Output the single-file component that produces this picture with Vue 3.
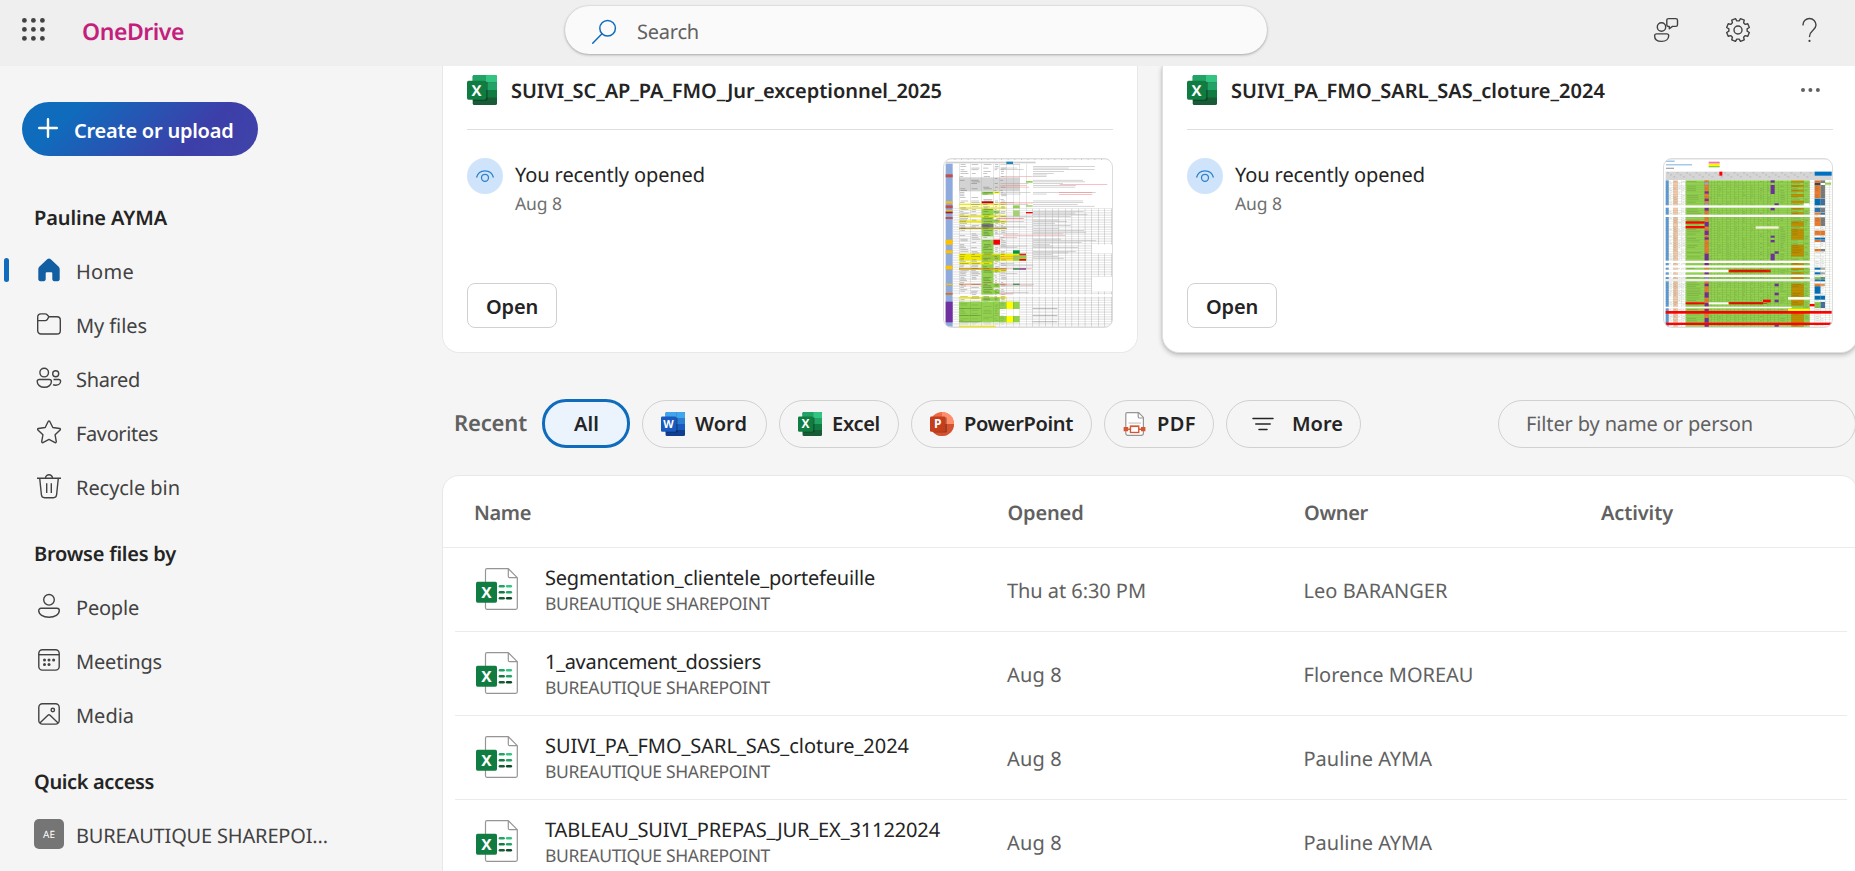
<script setup>
const vFit = {
  // Tracks a label so that it spans its design measure exactly.
  mounted(el, { value }) {
    if (!value) return
    const natural = el.getBoundingClientRect().width
    el.style.letterSpacing = (value - natural) / el.textContent.length + 'px'
  },
}

function gearPath() {
  const pts = []
  for (let k = 0; k < 8; k++) {
    const a = 22.5 + 45 * k
    for (const [d, r] of [[-15, 9.2], [-10, 11.6], [10, 11.6], [15, 9.2]]) {
      const t = ((a + d) * Math.PI) / 180
      pts.push((12 + r * Math.cos(t)).toFixed(2) + ' ' + (12 + r * Math.sin(t)).toFixed(2))
    }
  }
  return 'M' + pts.join('L') + 'Z'
}

const icons = {
  home: '<path fill="#115ea3" d="M10.5 1.1a2.2 2.2 0 0 1 3 0l8 7.3c.8.7 1.2 1.6 1.2 2.6v10.3c0 1-.8 1.9-1.9 1.9h-3.6c-1 0-1.9-.9-1.9-1.9v-6.1a1 1 0 0 0-1-1h-4.6a1 1 0 0 0-1 1v6.1c0 1-.8 1.9-1.9 1.9H3.2c-1 0-1.9-.9-1.9-1.9V11c0-1 .4-1.9 1.2-2.6z"/>',
  folder: '<path d="M.7 5.2a3.3 3.3 0 0 1 3.3-3.3h4.300c.7 0 1.300.3 1.800.8L12 4.700h8a3.300 3.300 0 0 1 3.300 3.300v10.700a3.300 3.300 0 0 1-3.300 3.300H4a3.300 3.300 0 0 1-3.300-3.300zM.7 8.600h7.600c.7 0 1.300-.3 1.800-.8L12 4.700"/>',
  shared: '<circle cx="7.200" cy="6.600" r="4.300"/><path d="M2.200 13.500h10.200a2 2 0 0 1 2 2c0 3.200-2.800 5.800-7 5.800s-7.200-2.600-7.200-5.800a2 2 0 0 1 2-2z"/><circle cx="18.700" cy="7.800" r="3"/><path d="M16.500 13.500h5.300c1 0 1.800.8 1.800 1.800 0 2-2 3.900-5 3.900-1 0-1.800-.1-2.500-.5"/>',
  star: '<path stroke-linejoin="round" d="M11.300 1.300a.8.8 0 0 1 1.400 0l3.100 6.200 6.900 1c.7.100 1 1 .4 1.500l-5 4.800 1.200 6.900c.1.700-.6 1.200-1.200.9L12 19.400l-6.100 3.200c-.6.3-1.300-.2-1.200-.9l1.200-6.900-5-4.800c-.5-.5-.3-1.400.4-1.500l6.900-1z"/>',
  bin: '<path d="M0 4.300h24M8.500 4.300a3.500 3.500 0 0 1 7 0M2.700 4.300l1.700 16.500a3.200 3.200 0 0 0 3.200 2.900h8.800a3.200 3.200 0 0 0 3.200-2.900l1.700-16.500M9.700 9.200v9.800M14.300 9.200v9.800"/>',
  person: '<circle cx="12" cy="5.800" r="5.300"/><path d="M4 14.300h16a2.300 2.300 0 0 1 2.300 2.300c0 3.800-4.300 6.700-10.300 6.700S1.700 20.400 1.700 16.600A2.300 2.300 0 0 1 4 14.300z"/>',
  calendar: '<rect x="1.800" y="1.700" width="20.400" height="20.400" rx="3.600"/><path d="M1.800 6.700h20.400"/><g fill="#424242" stroke="none"><circle cx="7.500" cy="12" r="1.500"/><circle cx="12" cy="12" r="1.500"/><circle cx="16.600" cy="12" r="1.500"/><circle cx="7.500" cy="16.500" r="1.500"/><circle cx="12" cy="16.500" r="1.500"/></g>',
  media: '<rect x="1.800" y="1.700" width="20.400" height="20.400" rx="3.600"/><circle cx="15.800" cy="8" r="1.700"/><path d="M2.900 21l8-7.700a1.600 1.600 0 0 1 2.200 0l8 7.700"/>',
  search: '<circle cx="15.600" cy="8.200" r="7.800"/><path stroke-linecap="round" d="M10 13.800L.7 23.300"/>',
  feedback: '<circle cx="7.500" cy="9" r="4.200"/><path d="M2.300 15.900h10.600a1.800 1.800 0 0 1 1.800 1.800c0 3.300-2.700 5.700-7.100 5.700S.6 21 .6 17.700a1.800 1.800 0 0 1 1.700-1.800z"/><path stroke-linejoin="round" d="M14.500.6h7.300a1.700 1.700 0 0 1 1.700 1.700v4.400a1.700 1.700 0 0 1-1.700 1.700h-3.300l-3.200 2.300V8.400h-.8a1.700 1.700 0 0 1-1.700-1.700V2.300a1.700 1.700 0 0 1 1.700-1.700z"/>',
  gear: '<path stroke-linejoin="round" d="' + gearPath() + '"/><circle cx="12" cy="12" r="4"/>',
  help: '<path stroke-linecap="round" d="M5 6.900a6.500 6.500 0 0 1 13 .1c0 3-1.800 4.300-3.700 6-1.800 1.600-2.800 2.900-2.800 5.500"/><circle cx="11.500" cy="22.900" r="1.100" fill="#424242" stroke="none"/>',
}

const letter = (ch, x, y, s) =>
  `<text x="${x}" y="${y}" font-size="${s}" font-weight="700" fill="#fff" text-anchor="middle" font-family="Open Sans, Noto Sans, sans-serif">${ch}</text>`
const sheetRows = (c) =>
  `<rect x="5.700" width="24.300" height="30" rx="1.600" fill="${c[3]}"/><path fill="${c[0]}" d="M7.300 0H19v7.500H5.700V1.600A1.600 1.600 0 0 1 7.300 0z"/><path fill="${c[1]}" d="M19 0h9.400A1.600 1.600 0 0 1 30 1.600V7.500H19z"/><path fill="${c[4]}" d="M5.700 7.500H19V15H5.700z"/><path fill="${c[2]}" d="M19 7.500h11V15H19z"/><path fill="${c[5]}" d="M19 15h11v7.500H19z"/><path fill="#000" opacity=".28" d="M5.700 6.500h13.500a1.600 1.600 0 0 1 1.600 1.600v16a1.600 1.600 0 0 1-1.600 1.600H5.700z"/>`
const logos = {
  excel: sheetRows(['#21a366', '#33c481', '#21a366', '#185c37', '#107c41', '#107c41']) + '<rect y="5.700" width="19" height="19" rx="1.600" fill="#107c41"/>' + letter('X', 9.4, 20.6, 15),
  word: sheetRows(['#41a5ee', '#41a5ee', '#2b7cd3', '#103f91', '#2b7cd3', '#185abd']) + '<path fill="#185abd" d="M5.700 15H19v7.500H5.700z"/><rect y="5.700" width="19" height="19" rx="1.600" fill="#185abd"/>' + letter('W', 9.5, 20.2, 13.5),
  powerpoint: '<circle cx="15" cy="15" r="15" fill="#ed6c47"/><path fill="#ff8f6b" d="M15 0a15 15 0 0 1 15 15H15z"/><path fill="#d35230" d="M0 15h30a15 15 0 0 1-30 0z"/><path fill="#000" opacity=".3" d="M6 6.500h13.400a1.600 1.600 0 0 1 1.600 1.600v16a1.600 1.600 0 0 1-1.600 1.600H5z"/><rect y="5.700" width="19.300" height="19" rx="1.600" fill="#c43e1c"/>' + letter('P', 9.8, 20.6, 15),
  pdf: '<path d="M5 .8h14.500l6 6V27a2.200 2.200 0 0 1-2.200 2.200H5.700A2.200 2.200 0 0 1 3.500 27V2.400A1.600 1.600 0 0 1 5 .8z" fill="#fff" stroke="#979593" stroke-width="1.500"/><path d="M19 1v4.800A1.600 1.600 0 0 0 20.600 7.500h5" fill="none" stroke="#979593" stroke-width="1.500"/><path d="M7 13.800h15.500" stroke="#c8c6c4" stroke-width="1.500"/><path d="M8.500 17h12" stroke="#e8a692" stroke-width="1.300"/><path fill="#d65532" d="M.8 18.800h5.700v5.400H.8zM22.500 18.800H28v5.400h-5.500z"/><rect x="9.300" y="18" width="10.400" height="7.600" fill="#fff" stroke="#d65532" stroke-width="1.700"/><path fill="#d65532" d="M6.500 20.700h3v1.700h-3zM19.700 20.700h3v1.700h-3z"/>',
  more: '<path d="M2.500 8h25M6 15h18M10 22h10" stroke="#242424" stroke-width="1.900" stroke-linecap="round"/>',
}

const groups = [
  { title: 'Pauline AYMA', w: 133, items: [
    { icon: 'home', label: 'Home', w: 58, active: true },
    { icon: 'folder', label: 'My files', w: 71 },
    { icon: 'shared', label: 'Shared', w: 64 },
    { icon: 'star', label: 'Favorites', w: 82 },
    { icon: 'bin', label: 'Recycle bin', w: 104 },
  ] },
  { title: 'Browse files by', w: 142, items: [
    { icon: 'person', label: 'People', w: 63 },
    { icon: 'calendar', label: 'Meetings', w: 86 },
    { icon: 'media', label: 'Media', w: 58 },
  ] },
  { title: 'Quick access', w: 120, items: [{ badge: 'AE', label: 'BUREAUTIQUE SHAREPOI…', w: 252 }] },
]

const pills = [
  { label: 'All', w: 25, active: true, cls: 'p-all' },
  { label: 'Word', w: 52, logo: 'word', cls: 'p-word' },
  { label: 'Excel', w: 48, logo: 'excel', cls: 'p-excel' },
  { label: 'PowerPoint', w: 109, logo: 'powerpoint', cls: 'p-ppt' },
  { label: 'PDF', w: 39, logo: 'pdf', cls: 'p-pdf' },
  { label: 'More', w: 51, logo: 'more', cls: 'p-more' },
]

const rows = [
  { name: 'Segmentation_clientele_portefeuille', w: 330, opened: 'Thu at 6:30 PM', ow: 139, owner: 'Leo BARANGER', pw: 144 },
  { name: '1_avancement_dossiers', w: 216, opened: 'Aug 8', ow: 55, owner: 'Florence MOREAU', pw: 170 },
  { name: 'SUIVI_PA_FMO_SARL_SAS_cloture_2024', w: 364, opened: 'Aug 8', ow: 55, owner: 'Pauline AYMA', pw: 128.5 },
  { name: 'TABLEAU_SUIVI_PREPAS_JUR_EX_31122024', w: 395, opened: 'Aug 8', ow: 55, owner: 'Pauline AYMA', pw: 128.5 },
]

let seed = 7
const rnd = () => (seed = (seed * 16807) % 2147483647) / 2147483647
const G = '#92d050', Y = '#f0ea00', R = '#fe0000', P = '#7030a0', O = '#ffc000', B = '#8faadc'

function sheetA() {
  const s = []
  const add = (x, y, w, h, c) => s.push([x, y, w, h, c])
  add(8, 1, 500, 5, '#f1f1f1')
  for (let x = 14; x < 500; x += 20) add(x, 3, 3, 2, '#b8b8b8')
  add(8, 11, 270, 5, '#cfcfcf')
  add(190, 11, 20, 7, '#1b86b8')
  add(8, 17, 21, 489, B)
  for (const [y, h, c] of [[49, 9, '#c0504d'], [130, 6, O], [142, 9, '#c0504d'], [157, 4, O], [161, 5, '#a02020'], [177, 6, '#c0504d'], [245, 15, O], [277, 9, O], [323, 11, O], [377, 4, O], [405, 5, '#e26b0a'], [431, 62, P]]) add(8, y, 21, h, c)
  add(48, 58, 182, 42, '#d3d3d3')
  // right-hand grid
  for (let i = 0, y = 152; y < 506; y += 5.2, i++) {
    const wide = y < 260 || (y > 287 && y < 355) || y > 400
    add(29, y, wide ? 480 : 418, 0.9, '#b9b9b9')
  }
  for (let x = 268; x < 510; x += 19.7) {
    add(x, 152, 1, x > 450 ? 108 : 354, '#999')
    if (x > 450) { add(x, 287, 1, 68, '#999'); add(x, 400, 1, 106, '#999') }
  }
  for (const x of [48, 82, 116, 151, 170, 190, 210, 229, 249]) add(x, 17, 0.9, 489, '#aaa')
  // highlighted cells
  add(116, 152, 35, 275, G)
  add(116, 101, 35, 9, G); add(151, 101, 19, 5, Y)
  add(48, 137, 143, 4, Y); add(48, 148, 143, 4, Y); add(210, 142, 20, 9, G); add(249, 142, 20, 4, G); add(249, 69, 20, 5, G)
  add(116, 130, 35, 6, '#c00000'); add(249, 162, 20, 4, R); add(210, 157, 20, 18, '#a9cf76')
  add(48, 172, 143, 5, Y); add(48, 188, 143, 6, Y); add(116, 185, 54, 9, '#9ac653'); add(151, 158, 19, 8, G)
  add(48, 209, 143, 4, '#b9a428'); add(116, 198, 35, 10, '#777')
  add(151, 245, 20, 15, R); add(116, 235, 35, 10, '#eee')
  add(210, 277, 20, 11, '#009444')
  add(48, 287, 182, 21, Y); add(116, 290, 55, 18, '#9dc83b'); add(210, 292, 40, 16, G); add(229, 287, 20, 5, '#e02020'); add(229, 303, 20, 5, R)
  add(48, 313, 100, 6, Y); add(48, 330, 143, 5, '#d2a017'); add(210, 330, 20, 5, '#009444'); add(229, 330, 20, 5, P)
  add(116, 336, 55, 7, G); add(151, 336, 39, 4, Y)
  add(48, 377, 143, 4, '#f4a47a'); add(116, 377, 54, 12, G); add(210, 377, 20, 4, '#009444'); add(116, 395, 54, 14, G)
  add(29, 410, 480, 6, '#fff'); add(48, 417, 143, 5, Y); add(116, 418, 54, 12, G)
  add(48, 431, 182, 62, G); add(190, 431, 20, 22, '#ffff00'); add(170, 453, 60, 21, '#fff'); add(190, 474, 20, 19, '#ffff00')
  for (const x of [82, 116, 151, 170, 190, 210]) add(x, 431, 0.8, 62, 'rgba(60,90,40,.45)')
  add(48, 503, 110, 4, Y)
  // cell contents
  for (let y = 19; y < 502; y += 5.2) {
    for (const [x, w] of [[50, 26], [84, 27], [120, 27], [154, 12], [172, 16]])
      if (rnd() < (y < 125 ? 0.6 : 0.75)) add(x + rnd() * 3, y, w * (0.4 + rnd() * 0.6), 1.6, y < 425 ? 'rgba(45,45,45,.5)' : 'rgba(45,60,20,.22)')
    if (y < 420 && rnd() < 0.4) add(172, y, 30 + rnd() * 75, 1.4, rnd() < 0.2 ? '#e98888' : '#a5a5a5')
    if (y < 300 && rnd() < 0.62) add(270, y, 40 + rnd() * 160, 1.4, '#a3a3a3')
  }
  add(350, 78, 143, 1.5, '#f08080'); add(348, 103, 100, 1.5, '#f08080'); add(348, 109, 100, 1.5, '#f08080'); add(180, 232, 186, 1.5, '#ef9090')
  add(170, 134, 100, 1.5, '#ef6060'); add(160, 180, 82, 1.7, '#ef5050'); add(170, 407, 40, 1.5, '#ef6060')
  for (const y of [450, 471, 491]) { add(48, y, 65, 1.4, '#58813c'); add(269, y, 74, 1.4, '#777') }
  return s
}

function sheetB() {
  const s = []
  const add = (x, y, w, h, c) => s.push([x - 190, y - 475, w, h, c])
  add(196, 476, 500, 5, '#eee')
  add(199, 483, 26, 3, '#73acd8'); add(199, 494, 78, 3, '#79b1df'); add(199, 504, 24, 4, '#aaa')
  add(327, 486, 33, 6, '#f26cc0'); add(327, 492, 33, 7, '#f9f900'); add(327, 499, 33, 4, '#8fc93e')
  add(198, 516, 498, 25, '#d5d5d5'); add(645, 516, 51, 12, '#0070c0'); add(359, 516, 9, 12, R)
  for (let i = 0; i < 46; i++) add(202 + i * 9.5, 519 + (i % 3) * 6, 6, 1.6, '#a0a0a0')
  add(198, 542, 9, 439, '#5b9bd5'); add(221, 542, 13, 439, '#f4c9ac')
  add(258, 542, 372, 439, G)
  add(315, 542, 12, 439, '#ed7d31')
  for (const [y, h] of [[575, 7], [597, 7], [624, 9], [667, 14], [693, 13], [713, 7], [762, 21], [790, 8], [817, 7], [852, 8], [878, 16], [910, 10], [928, 10], [955, 14], [975, 6]]) add(315, y, 12, h, P)
  for (const y of [548, 611, 832]) add(315, y, 12, 7, '#8faadc')
  for (const [y, h] of [[543, 6], [556, 6], [570, 6], [583, 9], [603, 8], [624, 6], [638, 7], [665, 16], [687, 33], [735, 36], [790, 7], [804, 7], [818, 6], [832, 6], [852, 40], [898, 20], [928, 53]]) add(575, y, 37, h, '#c09000')
  for (const [x, y, h] of [[513, 542, 7], [513, 556, 27], [525, 611, 7], [513, 624, 8], [513, 708, 6], [513, 721, 7], [525, 755, 7], [513, 762, 21], [525, 852, 8], [525, 879, 8], [525, 900, 8], [525, 975, 6]]) add(x, y, 12, h, P)
  for (const [y, h, a, b] of [[542, 8, '#ed7d31', '#808080'], [550, 6, '#1f4e79', '#fff'], [556, 40, '#ed7d31', '#808080'], [597, 20, '#0070c0', '#4472a4'], [624, 14, '#2f75b5', '#808080'], [639, 6, '#ed7d31', '#2f75b5'], [653, 26, '#ed7d31', '#808080'], [693, 14, '#ed7d31', '#ed7d31'], [714, 6, '#0070c0', '#0070c0'], [721, 6, '#ed7d31', '#8080a0'], [748, 7, '#ed7d31', '#808080'], [804, 6, '#0070c0', '#aaa'], [818, 6, '#0070c0', '#aaa'], [832, 6, '#92d050', '#70a060'], [839, 6, '#2f75b5', '#0070c0'], [852, 8, '#ed7d31', '#f4a470'], [860, 22, '#0070c0', '#fff'], [888, 12, '#0070c0', '#0070c0'], [907, 18, '#92d050', '#4472a4']]) {
    add(645, y, 18, h, a); add(663, y, 13, h, b)
  }
  // row and column rules
  for (let y = 549; y < 981; y += 6.85) add(198, y, 498, 0.9, 'rgba(70,90,50,.3)')
  for (const x of [207, 221, 234, 246, 258, 315, 327, 336, 345, 354, 368, 380, 392, 404, 416, 428, 440, 452, 464, 477, 490, 502, 513, 525, 537, 564, 575, 612, 630, 645, 663, 676, 688]) add(x, 542, 0.9, 439, 'rgba(60,90,40,.36)')
  for (let y = 545; y < 978; y += 6.85)
    for (const [x, w] of [[209, 10], [223, 9], [236, 8], [248, 8], [262, 44], [317, 8], [330, 5], [357, 7], [383, 6], [407, 5], [430, 7], [455, 5], [481, 8], [504, 6], [542, 16], [578, 28], [615, 12], [647, 14], [665, 9]])
      if (rnd() < 0.7) add(x, y, w * (0.5 + rnd() * 0.5), 1.5, 'rgba(40,60,30,.32)')
  // separator bands
  for (const [y, h] of [[617, 7], [645, 7], [783, 7], [797, 7], [825, 7], [838, 7], [893, 5], [921, 7], [941, 7]]) {
    if (y === 893) add(565, y, 65, h, '#fff')
    else if (y !== 941) add(196, y, y > 890 ? 380 : 446, y === 921 ? 5 : h, y === 838 ? '#eee' : '#fff')
  }
  add(468, 680, 69, 7, '#f6f2dc')
  add(612, 611, 18, 8, '#fff'); add(565, 893, 65, 7, '#fff'); add(565, 927, 65, 7, '#ffff00')
  add(258, 665, 57, 7, R); add(258, 679, 57, 7, R)
  add(196, 810, 191, 8, '#fff')
  add(387, 810, 126, 8, '#ed1c00'); add(327, 908, 60, 6, '#fff'); add(387, 907, 103, 7, '#ed1c00'); add(490, 900, 23, 8, R); add(258, 908, 57, 6, R); add(630, 913, 15, 7, R)
  for (const y of [813, 910]) add(392, y, 110, 1.5, '#9c1400')
  add(676, 549, 18, 6, G)
  add(198, 934, 498, 8, R); add(198, 969, 498, 7, R)
  return s
}

const cards = [
  { title: 'SUIVI_SC_AP_PA_FMO_Jur_exceptionnel_2025', w: 431, cells: sheetA() },
  { title: 'SUIVI_PA_FMO_SARL_SAS_cloture_2024', w: 374, cells: sheetB(), hover: true },
]
</script>

<template>
  <div class="app">
    <header class="topbar">
      <svg class="waffle" viewBox="0 0 24 24">
        <template v-for="r in 3" :key="r">
          <circle v-for="c in 3" :key="c" :cx="c * 9 - 6.6" :cy="r * 9 - 6.6" r="2.4" />
        </template>
      </svg>
      <div class="brand"><span v-fit="102">OneDrive</span></div>
      <div class="search">
        <svg class="ic search-ic" viewBox="0 0 24 24" v-html="icons.search"></svg>
        <span v-fit="62">Search</span>
      </div>
      <div class="actions">
        <svg v-for="n in ['feedback', 'gear', 'help']" :key="n" class="ic" viewBox="0 0 24 24" v-html="icons[n]"></svg>
      </div>
    </header>

    <div class="body">
      <nav class="side">
        <button class="create">
          <svg viewBox="0 0 20 20"><path d="M10 1.2v17.6M1.2 10h17.6" /></svg>
          <span v-fit="159.5">Create or upload</span>
        </button>
        <section v-for="g in groups" :key="g.title" class="group">
          <h2><span v-fit="g.w">{{ g.title }}</span></h2>
          <a v-for="i in g.items" :key="i.label" class="nav" :class="{ active: i.active }">
            <span class="slot">
              <span v-if="i.badge" class="badge">{{ i.badge }}</span>
              <svg v-else class="ic" viewBox="0 0 24 24" v-html="icons[i.icon]"></svg>
            </span>
            <span v-fit="i.w" class="label">{{ i.label }}</span>
          </a>
        </section>
      </nav>

      <main class="main">
        <div class="cards">
          <article v-for="c in cards" :key="c.title" class="card" :class="{ hover: c.hover }">
            <div class="card-head">
              <svg class="xl" viewBox="0 0 30 30" v-html="logos.excel"></svg>
              <h3><span v-fit="c.w">{{ c.title }}</span></h3>
              <svg v-if="c.hover" class="dots" viewBox="0 0 20 6"><circle cx="3" cy="3" r="2" /><circle cx="10.400" cy="3" r="2" /><circle cx="17.900" cy="3" r="2" /></svg>
            </div>
            <div class="card-body">
              <div class="info">
                <div class="reason">
                  <span class="eye">
                    <svg viewBox="0 0 20 14"><path d="M1.500 8.500C2.700 4 6 1.800 10 1.800s7.300 2.200 8.500 6.700" /><circle cx="10" cy="8.800" r="3.500" /></svg>
                  </span>
                  <div>
                    <div class="what"><span v-fit="190">You recently opened</span></div>
                    <div class="when"><span v-fit="47">Aug 8</span></div>
                  </div>
                </div>
                <button class="open"><span v-fit="52">Open</span></button>
              </div>
              <svg class="thumb" viewBox="0 0 510 510" preserveAspectRatio="none">
                <rect v-for="(r, k) in c.cells" :key="k" :x="r[0]" :y="r[1]" :width="r[2]" :height="r[3]" :fill="r[4]" />
              </svg>
            </div>
          </article>
        </div>

        <div class="filters">
          <div class="recent"><span v-fit="73">Recent</span></div>
          <button v-for="p in pills" :key="p.label" class="pill" :class="[p.cls, { on: p.active }]">
            <svg v-if="p.logo" viewBox="0 0 30 30" v-html="logos[p.logo]"></svg>
            <span v-fit="p.w">{{ p.label }}</span>
          </button>
          <div class="filter-box"><span v-fit="227">Filter by name or person</span></div>
        </div>

        <div class="table">
          <div class="thead">
            <div><span v-fit="57">Name</span></div>
            <div><span v-fit="76">Opened</span></div>
            <div><span v-fit="64">Owner</span></div>
            <div><span v-fit="72">Activity</span></div>
          </div>
          <div v-for="r in rows" :key="r.name" class="row">
            <div class="file">
              <svg class="doc" viewBox="0 0 42 42">
                <path d="M11 .7h21.300l9 9V39.800a1.500 1.500 0 0 1-1.500 1.500H11a1.500 1.500 0 0 1-1.500-1.500V2.200A1.500 1.500 0 0 1 11 .7z" fill="#fff" stroke="#979593" stroke-width="1.200" />
                <path d="M32.300.9V8.200a1.500 1.500 0 0 0 1.500 1.500h7.300" fill="none" stroke="#979593" stroke-width="1.200" />
                <rect y="13.700" width="21" height="21" rx="1.600" fill="#107c41" />
                <text x="10.500" y="29.700" text-anchor="middle" font-size="15.500" font-weight="700" fill="#fff">X</text>
                <g stroke-width="2.600" stroke-linecap="round">
                  <path d="M24 18.200h3.600" stroke="#21a366" /><path d="M31.200 18.200h3.600" stroke="#33c481" />
                  <path d="M24 24.200h3.600" stroke="#107c41" /><path d="M31.200 24.200h3.600" stroke="#21a366" />
                  <path d="M24 30.200h3.600" stroke="#185c37" /><path d="M31.200 30.200h3.600" stroke="#0b4a2b" />
                </g>
              </svg>
              <div>
                <div class="name"><span v-fit="r.w">{{ r.name }}</span></div>
                <div class="site"><span v-fit="225">BUREAUTIQUE SHAREPOINT</span></div>
              </div>
            </div>
            <div class="cell"><span v-fit="r.ow">{{ r.opened }}</span></div>
            <div class="cell"><span v-fit="r.pw">{{ r.owner }}</span></div>
          </div>
        </div>
      </main>
    </div>
  </div>
</template>

<style>
html, body { margin: 0; overflow: hidden; background: #f5f5f5; }
</style>

<style scoped>
.app {
  width: 1855px; height: 871px; overflow: hidden; background: #f5f5f5;
  display: flex; flex-direction: column;
  font-family: "Noto Sans", "Open Sans", sans-serif; font-size: 20px; line-height: 28px; color: #242424;
  text-rendering: geometricPrecision; white-space: nowrap;
}
.app * { box-sizing: border-box; }
button { font: inherit; color: inherit; padding: 0; margin: 0; white-space: nowrap; }
h2, h3 { margin: 0; font-size: inherit; font-weight: 560; }

.topbar { flex: none; height: 66px; background: #efefef; display: grid; grid-template-columns: 60px 483px 702px 1fr; padding: 0 33px 0 22px; align-items: start; }
.waffle { width: 24px; height: 24px; margin-top: 18px; fill: #424242; }
.brand { color: #c3207c; font-size: 23px; font-weight: 560; line-height: 32px; margin-top: 15px; }
.search { height: 48px; margin-top: 6px; border-radius: 25px; background: #fafafa; box-shadow: 0 1px 3px rgba(0, 0, 0, .28), 0 0 2px rgba(0, 0, 0, .12); display: flex; align-items: center; gap: 21px; padding: 3px 0 0 27px; color: #616161; }
.ic { width: 24px; height: 24px; fill: none; stroke: #424242; stroke-width: 1.4; overflow: visible; flex: none; }
.search-ic { stroke: #0f6cbd; stroke-width: 1.5; }
.actions { display: flex; justify-content: flex-end; gap: 48px; margin-top: 18px; }

.body { flex: 1; min-height: 0; display: flex; }
.side { width: 442px; flex: none; padding-top: 36px; }
.create { margin-left: 22px; width: 236px; height: 54px; border: 0; border-radius: 27px; background: linear-gradient(135deg, #0f6cbd 20%, #3d3fa9 72%, #4043a9); color: #fff; font-weight: 560; display: flex; align-items: center; padding: 3px 0 0 16px; gap: 16px; }
.create svg { width: 20px; height: 20px; margin-top: -5px; fill: none; stroke: #fff; stroke-width: 2.4; stroke-linecap: round; }
.create + .group { margin-top: 34px; }
.group { margin-top: 12px; }
.group h2 { height: 54px; line-height: 56px; padding-left: 34px; }
.nav { height: 54px; display: flex; align-items: center; gap: 12px; padding-left: 34px; color: #424242; position: relative; }
.label { margin-top: 2px; }
.active::before { content: ""; position: absolute; left: 4px; top: 14px; width: 5px; height: 24px; border-radius: 3px; background: #0f6cbd; }
.active { font-weight: 450; }
.active .ic { stroke: none; }
.slot { width: 30px; height: 30px; display: flex; align-items: center; justify-content: center; margin-top: -2px; }
.badge { width: 30px; height: 30px; border-radius: 5px; background: #757575; color: #fff; font-size: 10px; line-height: 31px; text-align: center; }

.main { flex: none; width: 1416px; }
.cards { display: grid; grid-template-columns: 696px 696px; gap: 24px; height: 287px; }
.card { background: #fff; border: 1px solid #e8e8e8; border-top: 0; border-radius: 0 0 17px 17px; padding: 0 24px; height: 287px; }
.card.hover { border-color: #e0e0e0; box-shadow: 0 2px 5px rgba(0, 0, 0, .24), 0 0 2px rgba(0, 0, 0, .12); clip-path: inset(0 -12px -12px -12px); }
.card-head { height: 64px; border-bottom: 1px solid #dedede; display: flex; align-items: flex-start; padding-top: 9px; }
.xl { width: 30px; height: 30px; flex: none; }
h3 { margin-left: 14px; flex: 1; line-height: 31px; }
.dots { width: 20px; height: 6px; margin: 12px 13px 0 0; fill: #616161; }
.card-body { display: flex; justify-content: space-between; padding-top: 28px; }
.info { display: flex; flex-direction: column; justify-content: space-between; height: 170px; }
.reason { display: flex; gap: 12px; }
.eye { width: 36px; height: 36px; border-radius: 50%; background: #cfe4fa; display: flex; align-items: center; justify-content: center; flex: none; }
.eye svg { width: 20px; height: 14px; fill: none; stroke: #2b83cf; stroke-width: 1.3; }
.what { line-height: 34px; }
.when { font-size: 17.5px; line-height: 24px; color: #707070; }
.open { width: 90px; height: 45px; border: 1px solid #d1d1d1; border-radius: 8px; background: #fff; font-weight: 560; padding-top: 3px; }
.thumb { width: 170px; height: 170px; border-radius: 9px; outline: 1px solid #dcdcdc; outline-offset: -1px; background: #fff; overflow: hidden; }

.filters { display: flex; align-items: center; height: 51px; margin-top: 45px; padding-left: 12px; }
.recent { width: 88px; font-size: 22px; font-weight: 560; color: #616161; margin-top: -1px; }
.pill { height: 48px; border: 1px solid #d1d1d1; border-radius: 24px; background: transparent; font-weight: 560; display: flex; align-items: center; margin-right: 12px; padding-left: 18px; gap: 10px; }
.pill svg { width: 24px; height: 24px; flex: none; overflow: visible; }
.p-all { width: 88px; height: 49px; border: 3px solid #0f6cbd; background: #ebf3fc; padding-left: 29px; }
.p-word { width: 125px; }
.p-excel { width: 120px; }
.p-ppt { width: 181px; }
.p-pdf { width: 110px; }
.p-more { width: 135px; padding-left: 24px; gap: 17px; }
.filter-box { margin-left: auto; width: 358px; margin-right: 2px; height: 48px; border: 1px solid #d1d1d1; border-radius: 24px; line-height: 45px; padding-left: 27px; color: #616161; }

.table { margin-top: 26px; background: #fff; border: 1px solid #e8e8e8; border-radius: 17px 17px 0 0; height: 420px; }
.thead { height: 72px; border-bottom: 1px solid #ebebeb; display: grid; grid-template-columns: 533.5px 296.500px 297px 1fr; align-items: center; padding: 2px 0 0 31px; font-weight: 560; color: #616161; }
.row { height: 84px; margin: 0 10px 0 12px; border-bottom: 1px solid #ebebeb; display: grid; grid-template-columns: 532px 296.500px 1fr; align-items: center; padding-left: 20px; color: #616161; }
.cell { margin-top: 3px; }
.file { display: flex; gap: 27px; align-items: center; margin-top: 1px; }
.doc { width: 42px; height: 42px; flex: none; margin: -2px 0 0 1px; }
.name { color: #242424; line-height: 28px; margin-top: 1px; }
.site { font-size: 17.5px; line-height: 25px; }
</style>
